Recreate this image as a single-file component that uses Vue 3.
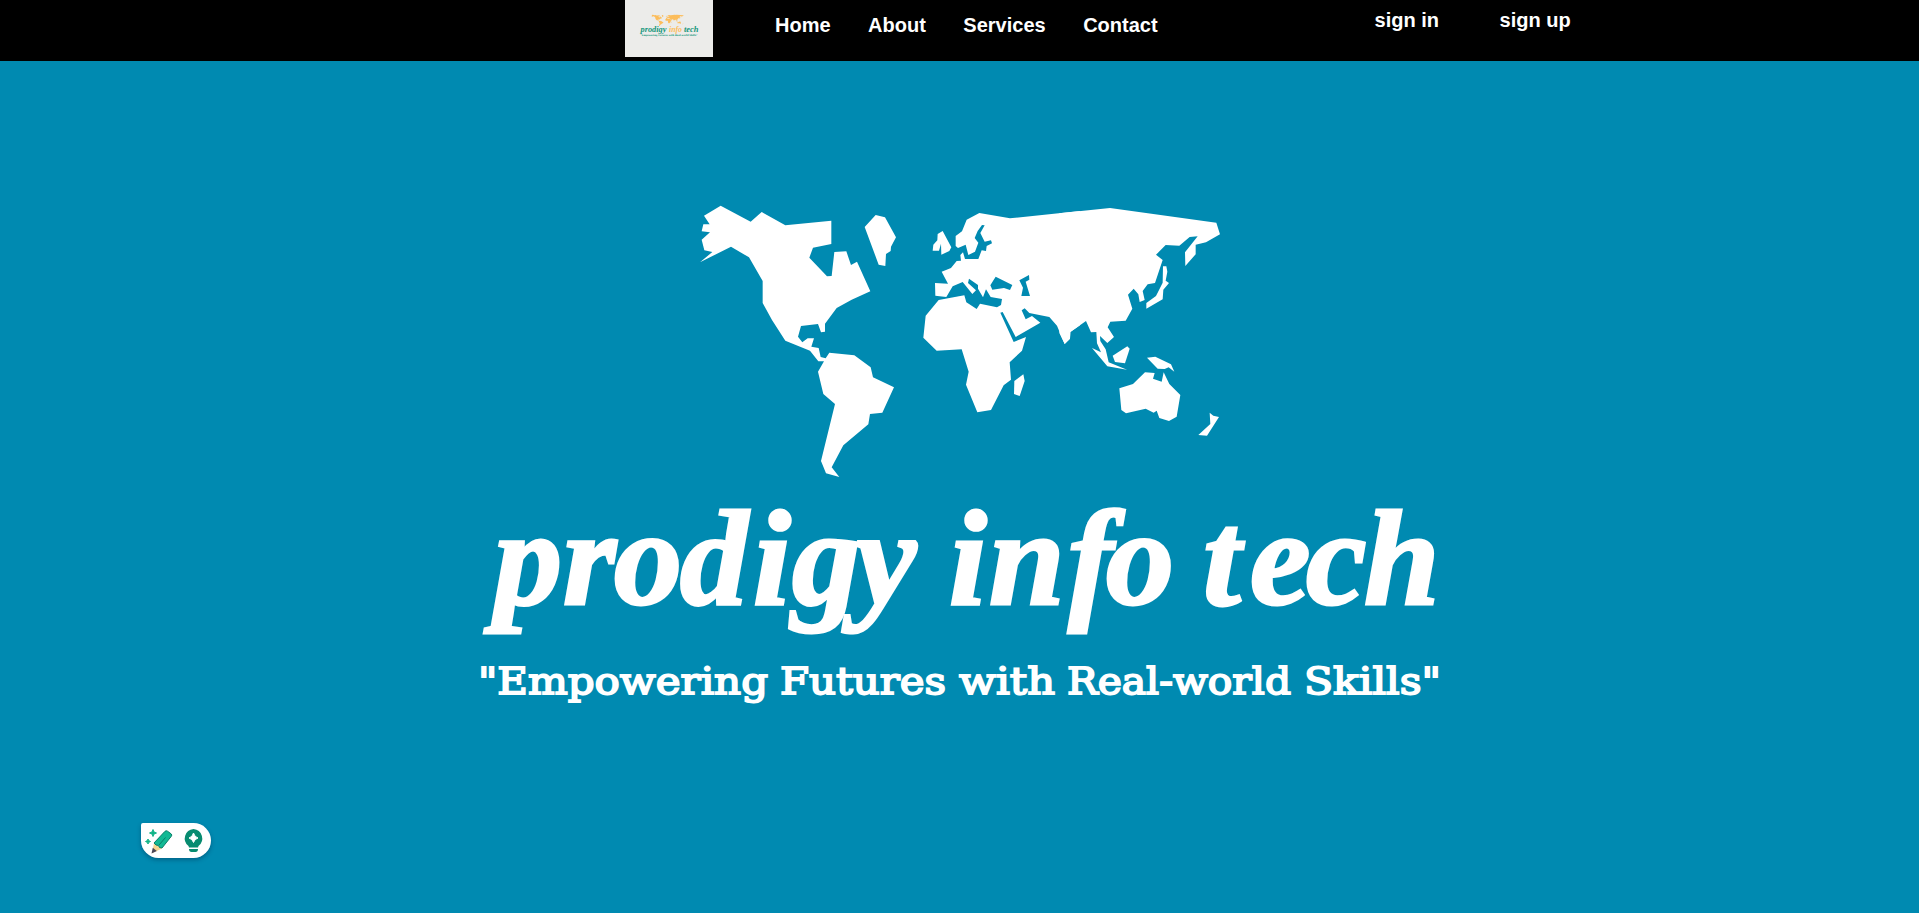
<script setup>
const links = ['Home', 'About', 'Services', 'Contact']
const account = ['sign in', 'sign up']

const americas = [
  '92,32 182,80 215,51 286,91 424,77 424,147 369,158 358,188 411,244 425,243 433,171 469,169 483,210 501,200 541,289 485,314 440,339 405,386 405,410 393,412 384,387 333,393 324,425 337,442 353,430 372,430 364,455 386,459 392,486 407,490 418,473 493,481 542,517 549,547 612,577 577,653 540,657 535,688 460,751 425,817 448,846 408,835 393,798 435,627 400,597 384,530 402,499 385,499 360,467 286,437 246,375 218,324 218,258 177,187 123,155 30,202 67,171 43,166 35,134 60,112 35,109 40,88 59,88 42,62',
  '557,60 585,67 618,127 603,155 602,168 588,177 586,213 566,209 524,96',
]
const africaEurope = [
  '540,48 540,391 511,411 510,431 494,447 471,392 448,366 388,354 374,340 365,346 377,373 396,363 421,383 347,426 308,351 301,353 341,441 378,426 366,467 329,502 333,554 311,571 273,645 232,652 198,569 206,530 185,463 110,467 70,428 77,362 116,315 193,301 199,322 230,342 240,326 291,337 303,330 306,312 272,306 258,283 249,307 234,281 234,270 207,251 204,264 228,286 217,297 188,261 158,274 139,306 106,302 105,264 144,266 125,230 153,219 170,198 183,197 181,180 189,172 195,192 235,192 245,166 258,168 260,153 276,145 273,136 254,140 241,114 254,91 246,90 233,108 224,129 235,143 225,170 205,180 197,149 174,159 167,153 167,123 186,109 200,74 238,54 330,70',
  '128,108 154,157 148,168 124,179 123,146 117,167 98,167 100,149 112,136 113,117',
  '370,538 374,558 359,603 342,597 343,558',
]
const seas = [
  '287,245 337,270 330,285 312,279 277,284 271,271',
  '387,240 388,254 377,260 390,303 364,303 369,278 358,256',
]
const asia = [
  '-2,55 150,39 469,83 480,118 438,142 407,149 407,178 376,213 375,172 413,124 389,126 358,152 317,150 288,179 308,195 285,264 263,268 248,288 254,315 239,321 235,298 221,281 204,299 217,341 197,377 151,380 143,397 162,426 142,444 120,423 121,438 137,463 146,502 201,524 142,514 96,459 123,472 111,445 109,411 93,412 78,378 31,411 30,431 14,447 -2,414',
  '309,214 319,214 322,230 317,257 327,264 310,284 308,313 259,341 259,324 288,303 308,263',
  '202,454 209,461 195,505 165,501 158,482',
  '261,488 286,485 333,508 343,530 326,517 314,522 293,521',
  '255,532 284,534 279,551 305,560 311,532 328,567 361,600 350,665 327,678 298,669 290,647 281,653 257,641 198,655 184,645 178,580 219,567',
  '449,653 460,662 477,666 441,722 415,720 451,687',
]
const title = [
  { text: 'prodigy', x: '494 563 614 680 753 792 856' },
  { text: 'info', x: '949 989 1068 1106' },
  { text: 'tech', x: '1203 1250 1306 1364' },
]
const tagline = [
  { text: '"Empowering', x: 478, w: 290 },
  { text: 'Futures', x: 780, w: 166 },
  { text: 'with', x: 959, w: 96 },
  { text: 'Real-world', x: 1067, w: 224 },
  { text: 'Skills"', x: 1304, w: 137 },
]
</script>

<template>
  <div class="page">
    <header class="bar">
      <svg class="logo" viewBox="0 0 88 57">
        <rect width="88" height="57" fill="#ececea" />
        <g fill="#fcbd5b" transform="translate(-16.5,6) scale(.0615,.042)">
          <g transform="translate(690,195) scale(.3333)">
            <polygon v-for="p in americas" :key="p" :points="p" />
          </g>
          <g transform="translate(900,195) scale(.3333)">
            <polygon v-for="p in africaEurope" :key="p" :points="p" />
          </g>
          <g transform="translate(1060,195) scale(.3333)">
            <polygon v-for="p in asia" :key="p" :points="p" />
          </g>
        </g>
        <g class="logo-name">
          <text x="15.5" y="32" textLength="26" lengthAdjust="spacingAndGlyphs">prodigy</text>
          <text x="44" y="32" textLength="13" lengthAdjust="spacingAndGlyphs" class="gold">info</text>
          <text x="59" y="32" textLength="14.5" lengthAdjust="spacingAndGlyphs">tech</text>
        </g>
        <text class="logo-tag" x="15.5" y="36" textLength="57" lengthAdjust="spacingAndGlyphs">"Empowering Futures with Real-world Skills"</text>
      </svg>
      <nav class="links">
        <a v-for="l in links" :key="l">{{ l }}</a>
      </nav>
      <div class="account">
        <a v-for="a in account" :key="a">{{ a }}</a>
      </div>
    </header>

    <main class="hero">
      <svg class="art" viewBox="0 61 1919 852">
        <g fill="#fff">
          <g transform="translate(690,195) scale(.33333)">
            <polygon v-for="p in americas" :key="p" :points="p" />
          </g>
          <g transform="translate(900,195) scale(.33333)">
            <polygon v-for="p in africaEurope" :key="p" :points="p" />
            <polygon v-for="p in seas" :key="p" :points="p" class="sea" />
          </g>
          <g transform="translate(1060,195) scale(.33333)">
            <polygon v-for="p in asia" :key="p" :points="p" />
          </g>
        </g>
        <text v-for="t in title" :key="t.text" class="title" :x="t.x" y="603.5">{{ t.text }}</text>
        <text
          v-for="t in tagline"
          :key="t.text"
          class="tagline"
          :x="t.x"
          y="694"
          :textLength="t.w"
          lengthAdjust="spacingAndGlyphs"
        >{{ t.text }}</text>
      </svg>

      <div class="assist">
        <svg viewBox="0 0 70 35">
          <g fill="#12b488" stroke="#12b488" stroke-width="1">
            <path d="M12 6.500 L13 9 L15.500 10 L13 11 L12 13.500 L11 11 L8.500 10 L11 9Z" />
            <path d="M7 16 L7.800 17.700 L9.500 18.500 L7.800 19.300 L7 21 L6.200 19.300 L4.500 18.500 L6.200 17.700Z" />
          </g>
          <path d="M13 20 L21 25.500 L11 30.300Z" fill="#f6d58f" />
          <path d="M11.800 24.800 L15.800 28 L10.500 30.500Z" fill="#4a4657" />
          <path d="M13 20 L24 8.300 Q25.300 7.300 26.500 8.200 L30.300 11 Q31.300 12 30.300 13.300 L21 25 L18.500 24.500 L17.500 22.500 L15 22Z" fill="#13b994" stroke="#087f68" stroke-width="1" />
          <path d="M18 22 L24.500 14.500" stroke="#087f68" stroke-width="1" />
          <path d="M52.500 6 A9.500 9.500 0 0 1 57.500 23 L57 24.500 H48 L47.500 23 A9.500 9.500 0 0 1 52.500 6Z" fill="#078b70" />
          <path d="M52.500 10 Q53.500 14 57 15 Q53.500 16 52.500 19.500 Q51.500 16 48 15 Q51.500 14 52.500 10Z" fill="#fff" stroke="#fff" />
          <path d="M48 26 H57 Q57 29 54.500 29 H50.500 Q48 29 48 26Z" fill="#078b70" />
        </svg>
      </div>
    </main>
  </div>
</template>

<style>
body {
  margin: 0;
  overflow: hidden;
}
</style>

<style scoped>
.page {
  height: 100vh;
  display: flex;
  flex-direction: column;
  background: #008ab1;
}
.bar {
  height: 61px;
  flex: none;
  box-sizing: border-box;
  padding-left: 625px;
  display: flex;
  align-items: flex-start;
  background: #000;
  color: #fff;
  font: bold 20px/23px "Liberation Sans", Arial, sans-serif;
}
.logo {
  width: 88px;
  height: 57px;
  flex: none;
}
.logo-name {
  font: italic bold 7.5px "Liberation Serif", serif;
  fill: #15967a;
}
.gold {
  fill: #fcbd5b;
}
.logo-tag {
  font: bold 2.5px "DejaVu Serif", serif;
  fill: #15967a;
}
.links {
  display: flex;
  gap: 37.5px;
  margin: 14px 0 0 62px;
}
.account {
  display: flex;
  gap: 60.5px;
  margin: 9px 0 0 217px;
}
.links a,
.account a {
  white-space: nowrap;
}
.hero {
  flex: 1;
  position: relative;
}
.art {
  display: block;
  width: 100%;
  height: 852px;
}
.sea {
  fill: #008ab1;
}
.title {
  font: italic bold 136px "Liberation Serif", serif;
  fill: #fff;
  stroke: #fff;
  stroke-width: 3px;
}
.tagline {
  font: 37.5px "DejaVu Serif", serif;
  fill: #fff;
  stroke: #fff;
  stroke-width: 1.8px;
}
.assist {
  position: absolute;
  left: 141px;
  top: 762px;
  width: 70px;
  height: 35px;
  border-radius: 2px 18px 18px 18px;
  background: #fff;
  box-shadow: 0 2px 4px rgba(0, 30, 60, 0.35);
}
.assist svg {
  display: block;
  width: 70px;
  height: 35px;
  fill: none;
}
</style>
